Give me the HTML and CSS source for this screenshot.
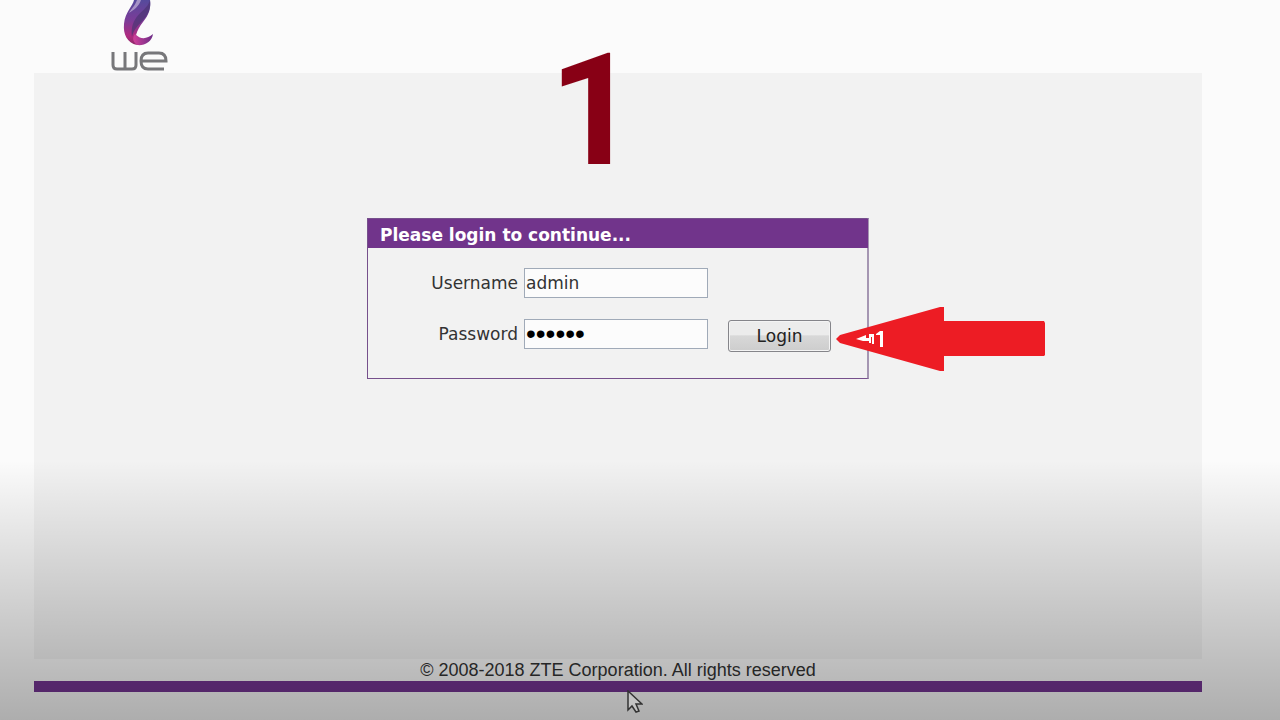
FILE: index.html
```html
<!DOCTYPE html>
<html lang="en">
<head>
<meta charset="UTF-8">
<meta name="viewport" content="width=device-width, initial-scale=1.0">
<title>Login</title>
<link rel="stylesheet" href="styles.css">
</head>
<body>

<header>
    <svg class="logo" width="60" height="73" viewBox="0 0 60 73" role="img" aria-label="we">
        <defs>
            <linearGradient id="flame" x1="0" y1="0" x2="0" y2="1">
                <stop offset="0" stop-color="#554a9c"/>
                <stop offset="0.45" stop-color="#7b3c98"/>
                <stop offset="0.8" stop-color="#b02b80"/>
                <stop offset="1" stop-color="#8c2868"/>
            </linearGradient>
            <linearGradient id="flameTail" x1="0" y1="0" x2="1" y2="0">
                <stop offset="0" stop-color="#d0409a"/>
                <stop offset="1" stop-color="#6b2c86"/>
            </linearGradient>
        </defs>
        <path fill="url(#flame)" d="M24 0 C23 6 15 12 14 24 C13 34 17 43 27 45 C24 38 26 31 33 22 C39 15 41 8 40 0 Z"/>
        <path fill="#4c3474" opacity="0.7" d="M40 0 C38 8 31 11 26 18 C22 24 21 30 22 37 C24 28 30 24 34 19 C40 12 41 6 40 0 Z"/>
        <path fill="#b9a6d2" opacity="0.8" d="M27 0 C25 6 21 9 19 13 C24 10 29 6 31 0 Z"/>
        <path fill="url(#flameTail)" d="M25 34 C31 40 37 39 43 34 C42 42 34 46 27 45 C23 42 22 38 25 34 Z"/>
        <g fill="none" stroke="#77777a" stroke-width="3">
            <path d="M3 52 V65 Q3 69 7 69 H22 Q26 69 26 65 V52 M15 52 V69"/>
            <path d="M54 69 H38 Q31 69 31 61 Q31 53 38 53 H49 Q56 53 56 61 H31"/>
        </g>
    </svg>
</header>

<main>
    <form class="login-box">
        <h1>Please login to continue...</h1>
        <div class="fields">
            <label for="username">Username</label>
            <input type="text" id="username" value="admin">
            <label for="password" class="second-row">Password</label>
            <input type="password" id="password" value="123456">
            <button type="button">Login</button>
        </div>
        <span class="step">1</span>
        <svg class="arrow" width="210" height="66" viewBox="0 0 210 66" aria-hidden="true">
            <path fill="#ed1c24" d="M0 33 L4 29 L104 1 H108 V15 H208 L209 17 V49 L208 50 H108 V65 H104 L4 37 Z"/>
            <path fill="#fff" d="M20 33 L30 29 V32 H33 V28 H38 V38 H36 V31 H35 V37 H33 V35 H27 Z M40 28 L44 25 H47 V41 H44 V29 H40 Z"/>
        </svg>
    </form>
</main>

<footer>
    <p>© 2008-2018 ZTE Corporation. All rights reserved</p>
    <div class="bar"></div>
</footer>

<div class="shade"></div>
<svg class="cursor" width="16" height="24" viewBox="0 0 16 24" aria-hidden="true">
    <path fill="#c4c4c4" stroke="#333" stroke-width="1.5" d="M1 1 V20 L5 16 L9 22 L12 21 L9 14 H15 Z"/>
</svg>

</body>
</html>
```

FILE: styles.css
```css
body {
    font-family: "DejaVu Sans", Verdana, sans-serif;
    margin: 0;
    padding: 0 78px 28px 34px;
    min-height: 100vh;
    box-sizing: border-box;
    display: flex;
    flex-direction: column;
    background-color: #fbfbfb;
    color: #333;
    position: relative;
}

header {
    height: 73px;
    padding-left: 76px;
}

.logo {
    display: block;
}

main {
    flex: 1;
    background-color: #f2f2f2;
    padding-top: 145px;
}

.login-box {
    position: relative;
    width: 502px;
    margin: 0 auto;
    box-sizing: border-box;
    border: 1px solid #76508c;
    border-right: 2px solid #a596b2;
}

.login-box h1 {
    margin: 0 -1px 0 0;
    padding: 4px 12px 0;
    height: 25px;
    line-height: 25px;
    font-size: 17px;
    color: #fff;
    background-color: #71348b;
}

.fields {
    display: grid;
    grid-template-columns: 150px 184px 124px;
    grid-auto-rows: 30px;
    column-gap: 6px;
    row-gap: 21px;
    padding: 20px 0 29px;
    align-items: center;
}

label {
    text-align: right;
    font-size: 17px;
}

.second-row {
    grid-column: 1;
}

input {
    width: 184px;
    height: 30px;
    box-sizing: border-box;
    padding: 0 1px;
    border: 1px solid #a0aab8;
    background-color: #fcfcfc;
    font-family: inherit;
    font-size: 17px;
    color: #333;
}

/* bigger font so the dots are bigger */
#password {
    font-family: "Liberation Sans", Arial, sans-serif;
    font-size: 28px;
    color: #000;
}

button {
    width: 103px;
    height: 32px;
    margin: 3px 0 0 14px;
    border: 1px solid #85858a;
    border-radius: 3px;
    box-shadow: inset 0 0 0 1px #f4f4f4;
    background: linear-gradient(#ececec 45%, #d8d8d8 50%, #cdcdcd);
    font-family: inherit;
    font-size: 17px;
    color: #222;
}

/* Step number and arrow drawn over the page */
.step {
    position: absolute;
    left: 181px;
    top: -188px;
    font-family: Roboto, Arial, sans-serif;
    font-size: 156px;
    font-weight: bold;
    line-height: 160px;
    color: #880015;
    z-index: 2;
}

.arrow {
    position: absolute;
    left: 468px;
    top: 87px;
    z-index: 2;
}

footer p {
    margin: 0;
    height: 22px;
    line-height: 22px;
    font-family: "Liberation Sans", Arial, sans-serif;
    font-size: 18px;
    text-align: center;
}

.bar {
    height: 11px;
    background-color: #743592;
}

/* Dark fade at the bottom of the page */
.shade {
    position: absolute;
    left: 0;
    right: 0;
    bottom: 0;
    height: 260px;
    background: linear-gradient(rgba(0, 0, 0, 0), rgba(0, 0, 0, 0.31));
    pointer-events: none;
}

.cursor {
    position: absolute;
    left: 49%;
    bottom: 6px;
}
```
